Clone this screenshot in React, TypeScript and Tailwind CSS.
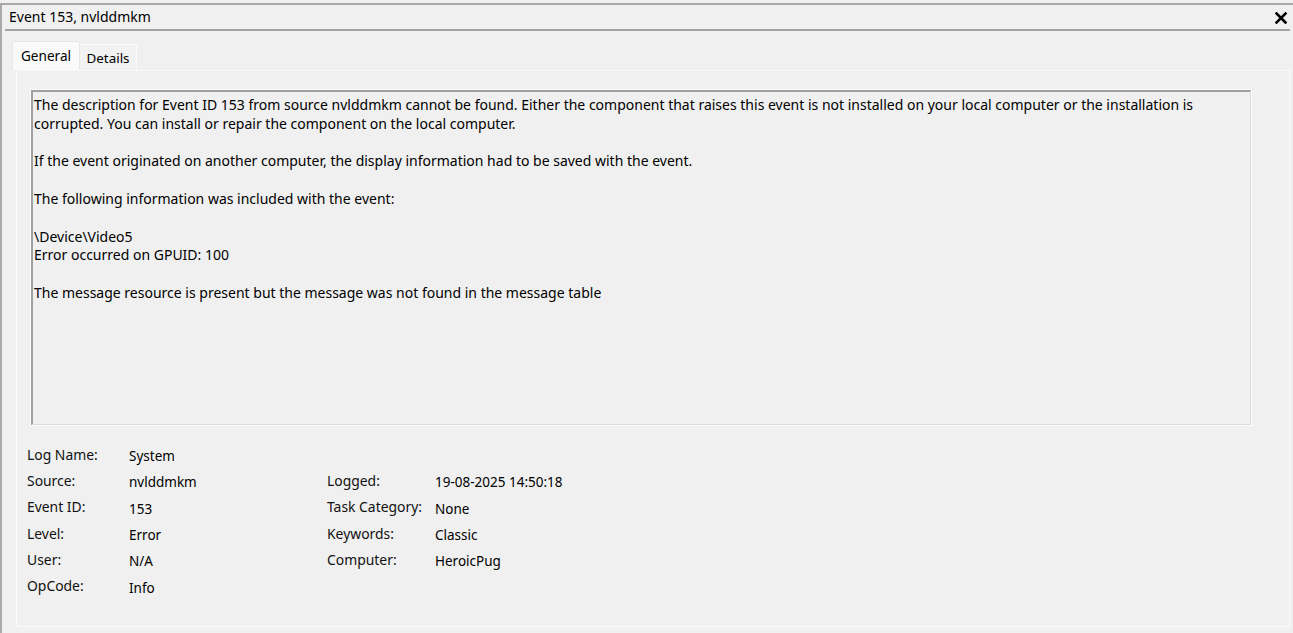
import React from "react";

const rowsLeft: [string, string][] = [
  ["Log Name:", "System"],
  ["Source:", "nvlddmkm"],
  ["Event ID:", "153"],
  ["Level:", "Error"],
  ["User:", "N/A"],
  ["OpCode:", "Info"],
];

const rowsRight: [string, string][] = [
  ["Logged:", "19-08-2025 14:50:18"],
  ["Task Category:", "None"],
  ["Keywords:", "Classic"],
  ["Computer:", "HeroicPug"],
];

function Row({ label, value, labelW }: { label: string; value: string; labelW: string }) {
  return (
    <div className="flex h-[26.3px] items-center">
      <div className={`${labelW} -mt-[2px] text-[13.9px] text-[#111]`}>{label}</div>
      <div className="text-[13.5px]">{value}</div>
    </div>
  );
}

export default function App() {
  return (
    <div
      className="w-[1293px] h-[633px] bg-[#f0f0f0] overflow-hidden pt-[3px] text-black"
      style={{ fontFamily: '"Noto Sans", "Open Sans", sans-serif' }}
    >
      <div className="h-[630px] border-t-2 border-l-2 border-[#a9a9a9] flex flex-col">
        {/* title bar */}
        <div className="mx-[3px] h-[26px] border-b-2 border-[#a3a3a3] flex items-center justify-between pl-[4px] pr-[3px]">
          <span className="text-[14px] leading-none">Event 153, nvlddmkm</span>
          <svg width="12" height="12" viewBox="0 0 12 12" className="mt-[1px]">
            <path d="M1.5 1.5 L10.5 10.5 M10.5 1.5 L1.5 10.5" stroke="#000" strokeWidth="2.6" strokeLinecap="square" />
          </svg>
        </div>

        {/* tabs */}
        <div className="pl-[10px] pt-[10px] flex items-end">
          <div className="w-[68px] h-[29px] bg-[#fafafa] border border-b-0 border-[#e6e6e6] flex items-center justify-center text-[13.6px]">
            General
          </div>
          <div className="w-[57px] h-[26px] bg-[#f2f2f2] border border-b-0 border-l-0 border-[#fafafa] flex items-center justify-center text-[13.4px] pt-[1px]">
            Details
          </div>
        </div>

        {/* panel */}
        <div className="ml-[14px] mr-[3px] h-[557px] border border-[#fbfbfb] border-t-[#f8f8f8] bg-[#f0f0f0] pt-[19px] pl-[14px] pr-[38px]">
          <div className="h-[335px] border-t-2 border-l-2 border-[#a0a0a0] border-r border-b border-r-[#dcdcdc] border-b-[#dcdcdc] outline outline-1 outline-[#fbfbfb] pl-[1px] pt-[4px] text-[14px] leading-[19px]">
            <p className="leading-[18.5px]">
              The description for Event ID 153 from source nvlddmkm cannot be found. Either the component that raises this event is not installed on your local computer or the installation is corrupted. You can install or repair the component on the local computer.
            </p>
            <p className="mt-[17.5px]">If the event originated on another computer, the display information had to be saved with the event.</p>
            <p className="mt-[19px]">The following information was included with the event:</p>
            <p className="mt-[19px]">\Device\Video5</p>
            <p className="-mt-[0.5px]">Error occurred on GPUID: 100</p>
            <p className="mt-[18.5px]">The message resource is present but the message was not found in the message table</p>
          </div>

          <div className="mt-[18px] flex -ml-[4px]">
            <div className="w-[300px]">
              {rowsLeft.map(([l, v]) => (
                <Row key={l} label={l} value={v} labelW="w-[102px]" />
              ))}
            </div>
            <div className="pt-[26.3px]">
              {rowsRight.map(([l, v]) => (
                <Row key={l} label={l} value={v} labelW="w-[108px]" />
              ))}
            </div>
          </div>
        </div>
      </div>
    </div>
  );
}
